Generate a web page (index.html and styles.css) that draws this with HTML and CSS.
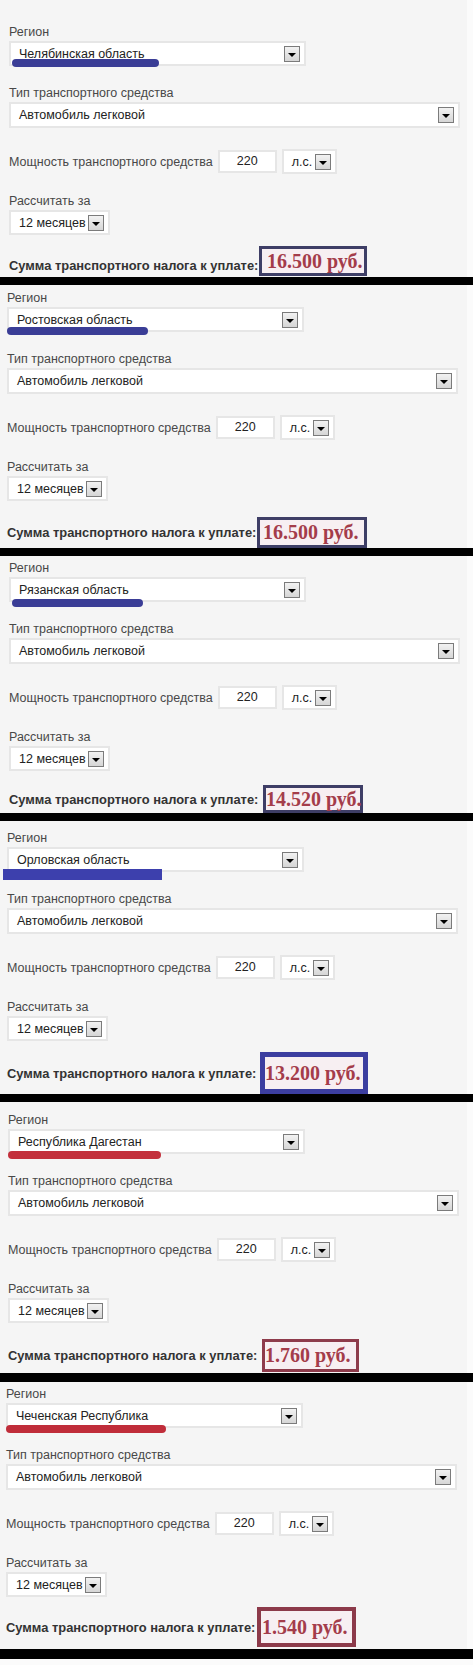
FILE: index.html
```html
<!DOCTYPE html>
<html>
  <head>
    <title>Транспортный налог</title>
    <link rel="stylesheet" href="styles.css">
  </head>
  <body>
    <div class="shot shot-1">
      <div class="label">Регион</div>
      <div class="region">
        <div class="select select-region"><span>Челябинская область</span><i class="arrow"></i></div>
        <span class="mark mark-1"></span>
      </div>
      <div class="label label-gap">Тип транспортного средства</div>
      <div class="select select-type"><span>Автомобиль легковой</span><i class="arrow"></i></div>
      <div class="power">
        <span class="power-label">Мощность транспортного средства</span>
        <div class="input">220</div>
        <div class="select select-unit"><span>л.с.</span><i class="arrow"></i></div>
      </div>
      <div class="label label-gap">Рассчитать за</div>
      <div class="select select-period"><span>12 месяцев</span><i class="arrow"></i></div>
      <div class="sum sum-1">
        <span class="sum-label">Сумма транспортного налога к уплате:</span>
        <div class="total total-1">16.500 руб.</div>
      </div>
    </div>
    <div class="bar"></div>

    <div class="shot shot-2">
      <div class="label">Регион</div>
      <div class="region">
        <div class="select select-region"><span>Ростовская область</span><i class="arrow"></i></div>
        <span class="mark mark-2"></span>
      </div>
      <div class="label label-gap">Тип транспортного средства</div>
      <div class="select select-type"><span>Автомобиль легковой</span><i class="arrow"></i></div>
      <div class="power">
        <span class="power-label">Мощность транспортного средства</span>
        <div class="input">220</div>
        <div class="select select-unit"><span>л.с.</span><i class="arrow"></i></div>
      </div>
      <div class="label label-gap">Рассчитать за</div>
      <div class="select select-period"><span>12 месяцев</span><i class="arrow"></i></div>
      <div class="sum sum-2">
        <span class="sum-label">Сумма транспортного налога к уплате:</span>
        <div class="total total-2">16.500 руб.</div>
      </div>
    </div>
    <div class="bar"></div>

    <div class="shot shot-3">
      <div class="label">Регион</div>
      <div class="region">
        <div class="select select-region"><span>Рязанская область</span><i class="arrow"></i></div>
        <span class="mark mark-3"></span>
      </div>
      <div class="label label-gap">Тип транспортного средства</div>
      <div class="select select-type"><span>Автомобиль легковой</span><i class="arrow"></i></div>
      <div class="power">
        <span class="power-label">Мощность транспортного средства</span>
        <div class="input">220</div>
        <div class="select select-unit"><span>л.с.</span><i class="arrow"></i></div>
      </div>
      <div class="label label-gap">Рассчитать за</div>
      <div class="select select-period"><span>12 месяцев</span><i class="arrow"></i></div>
      <div class="sum sum-3">
        <span class="sum-label">Сумма транспортного налога к уплате:</span>
        <div class="total total-3">14.520 руб.</div>
      </div>
    </div>
    <div class="bar"></div>

    <div class="shot shot-4">
      <div class="label">Регион</div>
      <div class="region">
        <div class="select select-region"><span>Орловская область</span><i class="arrow"></i></div>
        <span class="mark mark-4"></span>
      </div>
      <div class="label label-gap">Тип транспортного средства</div>
      <div class="select select-type"><span>Автомобиль легковой</span><i class="arrow"></i></div>
      <div class="power">
        <span class="power-label">Мощность транспортного средства</span>
        <div class="input">220</div>
        <div class="select select-unit"><span>л.с.</span><i class="arrow"></i></div>
      </div>
      <div class="label label-gap">Рассчитать за</div>
      <div class="select select-period"><span>12 месяцев</span><i class="arrow"></i></div>
      <div class="sum sum-4">
        <span class="sum-label">Сумма транспортного налога к уплате:</span>
        <div class="total total-4">13.200 руб.</div>
      </div>
    </div>
    <div class="bar"></div>

    <div class="shot shot-5">
      <div class="label">Регион</div>
      <div class="region">
        <div class="select select-region"><span>Республика Дагестан</span><i class="arrow"></i></div>
        <span class="mark mark-5"></span>
      </div>
      <div class="label label-gap">Тип транспортного средства</div>
      <div class="select select-type"><span>Автомобиль легковой</span><i class="arrow"></i></div>
      <div class="power">
        <span class="power-label">Мощность транспортного средства</span>
        <div class="input">220</div>
        <div class="select select-unit"><span>л.с.</span><i class="arrow"></i></div>
      </div>
      <div class="label label-gap">Рассчитать за</div>
      <div class="select select-period"><span>12 месяцев</span><i class="arrow"></i></div>
      <div class="sum sum-5">
        <span class="sum-label">Сумма транспортного налога к уплате:</span>
        <div class="total total-5">1.760 руб.</div>
      </div>
    </div>
    <div class="bar bar-5"></div>

    <div class="shot shot-6">
      <div class="label">Регион</div>
      <div class="region">
        <div class="select select-region"><span>Чеченская Республика</span><i class="arrow"></i></div>
        <span class="mark mark-6"></span>
      </div>
      <div class="label label-gap">Тип транспортного средства</div>
      <div class="select select-type"><span>Автомобиль легковой</span><i class="arrow"></i></div>
      <div class="power">
        <span class="power-label">Мощность транспортного средства</span>
        <div class="input">220</div>
        <div class="select select-unit"><span>л.с.</span><i class="arrow"></i></div>
      </div>
      <div class="label label-gap">Рассчитать за</div>
      <div class="select select-period"><span>12 месяцев</span><i class="arrow"></i></div>
      <div class="sum sum-6">
        <span class="sum-label">Сумма транспортного налога к уплате:</span>
        <div class="total total-6">1.540 руб.</div>
      </div>
    </div>
    <div class="bar bar-6"></div>
  </body>
</html>
```

FILE: styles.css
```css
body {
  margin: 0;
  background: #fbfbfb;
  font-family: "Liberation Sans", Arial, sans-serif;
  font-size: 12.5px;
  color: #3c3c3c;
}
.shot {
  width: 467px;
  box-sizing: border-box;
  background: #f5f5f5;
  display: flex;
  flex-direction: column;
  align-items: flex-start;
}
.shot-1 { padding: 24px 0 1px 9px; }
.shot-2 { padding: 5px 0 0 7px; }
.shot-3 { padding: 4px 0 0 9px; }
.shot-4 { padding: 9px 0 0 7px; }
.shot-5 { padding: 10px 0 1px 8px; }
.shot-6 { padding: 4px 0 2px 6px; }

.bar {
  height: 8px;
  background: #000;
}
.bar-5 { height: 9px; }
.bar-6 { height: 10px; }

.label {
  height: 16px;
  line-height: 16px;
  color: #484848;
}
.label-gap { margin-top: 19px; }
.label-gap + .select { margin-top: 1px; }

.region {
  position: relative;
  margin-top: 1px;
}

/* fake select boxes */
.select {
  display: flex;
  align-items: center;
  justify-content: space-between;
  box-sizing: border-box;
  height: 25px;
  padding: 0 4px 0 8px;
  background: #fff;
  border: 2px solid #e6e6e6;
  color: #222;
}
.select-region { width: 297px; }
.select-type { width: 451px; height: 26px; }
.select-unit { width: 55px; }
.select-period { width: 101px; }

.arrow {
  position: relative;
  width: 16px;
  height: 16px;
  box-sizing: border-box;
  border: 1px solid #7b7b7b;
  background: linear-gradient(#f2f2f2, #d6d6d6);
}
.arrow::after {
  content: "";
  position: absolute;
  left: 3px;
  top: 6px;
  border-left: 4px solid transparent;
  border-right: 4px solid transparent;
  border-top: 4px solid #000;
}

.power {
  display: flex;
  align-items: center;
  gap: 5px;
  height: 25px;
  margin-top: 21px;
}
.power-label { color: #484848; }
.input {
  width: 59px;
  height: 23px;
  box-sizing: border-box;
  border: 2px solid #e6e6e6;
  background: #fff;
  color: #222;
  text-align: center;
  line-height: 19px;
}

/* annotation strokes */
.mark {
  position: absolute;
  height: 8px;
  border-radius: 4px;
  background: #3a3d96;
}
.mark-1 { left: 3px; width: 147px; top: 18px; }
.mark-2 { left: 0; width: 141px; top: 20px; }
.mark-3 { left: 3px; width: 131px; top: 22px; }
.mark-4 { left: -4px; width: 159px; top: 22px; height: 11px; border-radius: 0; background: #3d40ad; }
.mark-5 { left: 0; width: 153px; top: 22px; background: #c3303c; }
.mark-6 { left: 0; width: 160px; top: 22px; background: #c02d3a; }

.sum {
  display: flex;
  align-items: center;
}
.sum-label {
  width: 250px;
  white-space: nowrap;
  font-weight: bold;
  font-size: 12.9px;
  color: #333;
}
.total {
  display: flex;
  align-items: center;
  box-sizing: border-box;
  border: 3px solid #3e3e66;
  background: #f7eff2;
  font-family: "Liberation Serif", serif;
  font-weight: bold;
  font-size: 20px;
  color: #a43c4a;
  white-space: nowrap;
}
.sum-1 { margin-top: 11px; }
.sum-1 .sum-label { padding-top: 8px; }
.sum-2 { margin-top: 16px; }
.sum-3 { margin-top: 14px; }
.sum-4 { margin-top: 11px; }
.sum-5 { margin-top: 16px; }
.sum-6 { margin-top: 10px; }

.total-1 { width: 108px; height: 30px; padding-left: 5px; }
.total-2 { width: 110px; height: 31px; padding-left: 3px; }
.total-3 { width: 100px; height: 28px; margin-left: 4px; }
.total-4 { width: 108px; height: 42px; margin-left: 3px; border: 5px solid #3c3ea0; }
.total-5 { width: 97px; height: 33px; margin-left: 4px; border-color: #8e3b4b; }
.total-6 { width: 99px; height: 40px; margin-left: 1px; padding-left: 1px; border: 4px solid #8c3a4a; }
```
